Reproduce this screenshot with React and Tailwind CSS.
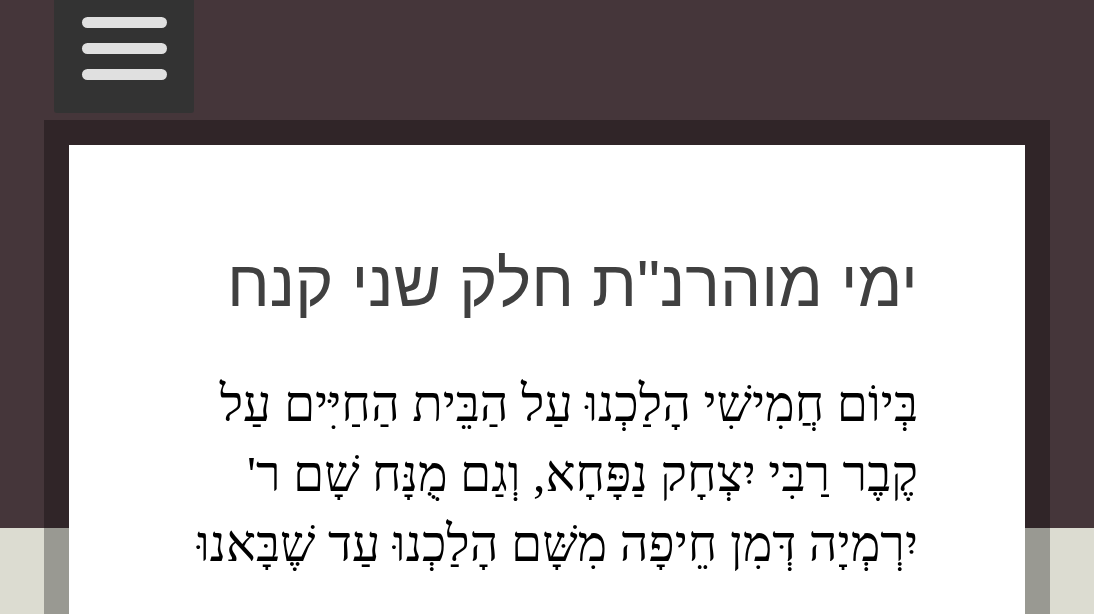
import { useState } from "react";

const text =
  "בְּיוֹם חֲמִישִׁי הָלַכְנוּ עַל הַבֵּית הַחַיִּים עַל קֶבֶר רַבִּי יִצְחָק נַפָּחָא, וְגַם מֻנָּח שָׁם ר' יִרְמְיָה דְּמִן חֵיפָה מִשָּׁם הָלַכְנוּ עַד שֶׁבָּאנוּ";

const App = () => {
  const [menuOpen, setMenuOpen] = useState(false);

  return (
    <div className="min-h-screen bg-[linear-gradient(to_bottom,#45363a_0,#45363a_528px,#dcdcd1_528px)]">
      <div className="px-[54px] h-[120px]">
        <button
          className="flex flex-col items-center gap-[15px] pt-[17px] w-[140px] h-[113px] bg-[#333333] rounded-b-[3px]"
          onClick={() => setMenuOpen(!menuOpen)}
        >
          <span className="block w-[85px] h-[11px] rounded-full bg-[#e0e0e0]" />
          <span className="block w-[85px] h-[11px] rounded-full bg-[#e0e0e0]" />
          <span className="block w-[85px] h-[11px] rounded-full bg-[#e0e0e0]" />
        </button>
      </div>

      <div className="mx-[44px] p-[25px] bg-black/30">
        <div className="bg-white pt-[106px] pb-[80px] px-[107px]" dir="rtl">
          <h1 className="text-[65px] leading-none text-[#404040] font-['Liberation_Sans',sans-serif]">
            ימי מוהרנ"ת חלק שני קנח
          </h1>
          <p className="mt-[53px] text-[50px] leading-[70px] text-black font-['Liberation_Serif',serif]">
            {text}
          </p>
        </div>
      </div>
    </div>
  );
};

export default App;
